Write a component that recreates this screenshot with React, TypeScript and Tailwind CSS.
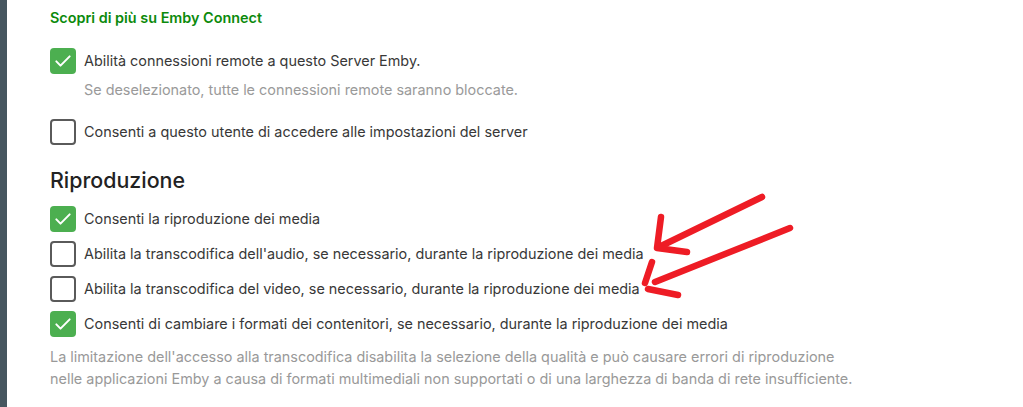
import React from 'react';

const Check = ({ checked }: { checked: boolean }) =>
    checked ? (
        <span className="flex h-[26px] w-[26px] shrink-0 items-center justify-center rounded-[4px] bg-[#4caf50]">
            <svg width="20" height="20" viewBox="0 0 24 24" fill="none" stroke="white" strokeWidth="2.4" strokeLinecap="round" strokeLinejoin="round">
                <path d="M4 12.5l5 5L20 6.5" />
            </svg>
        </span>
    ) : (
        <span className="h-[26px] w-[26px] shrink-0 rounded-[4px] border-2 border-[#5a5a5a] bg-white" />
    );

const Row = ({ checked, label, className = '' }: { checked: boolean; label: string; className?: string }) => (
    <div className={`flex items-center gap-[8px] ${className}`}>
        <Check checked={checked} />
        <span className="text-[14.4px] text-[#383838]">{label}</span>
    </div>
);

export default function App() {
    return (
        <div className="relative flex h-[407px] w-full overflow-hidden bg-white font-['Inter',sans-serif]">
            <div className="w-[7px] shrink-0 bg-[#46565f]" />

            <div className="flex flex-col pl-[43px] pt-[8px]">
                <a className="text-[14.4px] font-semibold leading-[20px] text-[#0c8a0c]">Scopri di più su Emby Connect</a>

                <Row checked label="Abilità connessioni remote a questo Server Emby." className="mt-[20px]" />
                <p className="ml-[34px] mt-[6px] text-[14.4px] leading-[20px] text-[#9a9a9a]">
                    Se deselezionato, tutte le connessioni remote saranno bloccate.
                </p>
                <Row checked={false} label="Consenti a questo utente di accedere alle impostazioni del server" className="mt-[19px]" />

                <h2 className="mt-[20px] text-[21.4px] font-medium leading-[30px] text-[#222]">Riproduzione</h2>

                <div className="mt-[11px] flex flex-col gap-[9px]">
                    <Row checked label="Consenti la riproduzione dei media" />
                    <Row checked={false} label="Abilita la transcodifica dell'audio, se necessario, durante la riproduzione dei media" />
                    <Row checked={false} label="Abilita la transcodifica del video, se necessario, durante la riproduzione dei media" />
                    <Row checked label="Consenti di cambiare i formati dei contenitori, se necessario, durante la riproduzione dei media" />
                </div>

                <p className="mt-[9px] text-[14.4px] leading-[22px] text-[#999]">
                    La limitazione dell'accesso alla transcodifica disabilita la selezione della qualità e può causare errori di riproduzione
                    <br />
                    nelle applicazioni Emby a causa di formati multimediali non supportati o di una larghezza di banda di rete insufficiente.
                </p>
            </div>

            {/* frecce rosse disegnate a mano */}
            <svg className="pointer-events-none absolute left-0 top-0" width="1023" height="407" fill="none" stroke="#ee1c25" strokeWidth="6.5" strokeLinecap="round" strokeLinejoin="round">
                <path d="M762 197 L659 247" />
                <path d="M661 217 L657 248 L687 252" />
                <path d="M790 228 L655 282" />
                <path d="M652 262 L645 283" />
                <path d="M648 289 L678 295" />
            </svg>
        </div>
    );
}
